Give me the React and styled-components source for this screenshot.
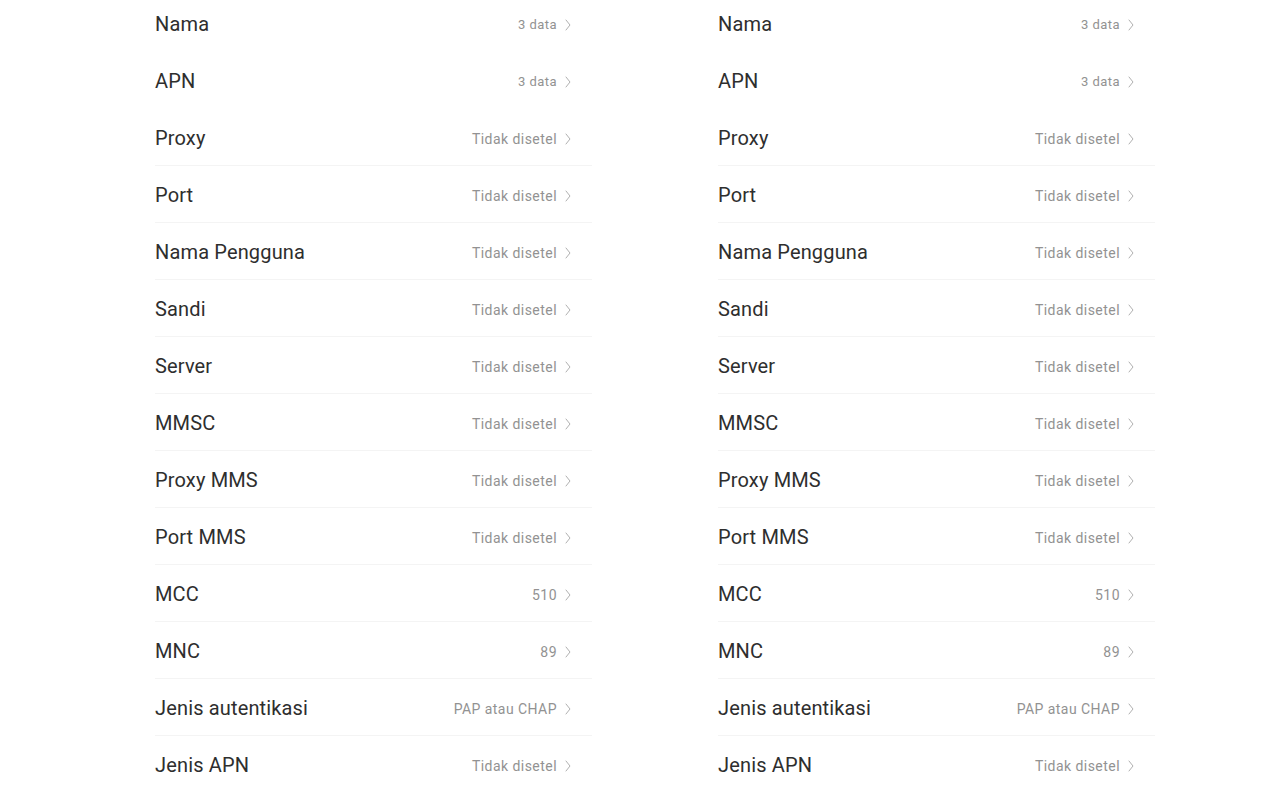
import React from 'react';
import styled, { createGlobalStyle } from 'styled-components';

const GlobalStyle = createGlobalStyle`
    html, body {
        margin: 0;
        padding: 0;
        background: #ffffff;
        overflow: hidden;
    }
    body {
        font-family: Roboto, "Noto Sans", Arial, sans-serif;
    }
`;

const Page = styled.main`
    width: 1283px;
    height: 785px;
    overflow: hidden;
    box-sizing: border-box;
    padding-left: 155px;
    display: grid;
    grid-template-columns: 437px 437px;
    column-gap: 126px;
    align-items: start;
`;

const List = styled.section`
    margin-top: -5px;
    display: flex;
    flex-direction: column;
`;

const Row = styled.div`
    height: 57px;
    box-sizing: border-box;
    display: flex;
    align-items: center;
    justify-content: space-between;
    padding-right: 21px;
    border-bottom: 1px solid ${(p) => (p.$divider ? '#f4f4f4' : 'transparent')};
`;

const Label = styled.span`
    font-size: 20px;
    color: #2e2e2e;
    letter-spacing: 0.15px;
    padding-top: 1px;
`;

const Value = styled.span`
    display: flex;
    align-items: center;
    gap: 8px;
    font-size: ${(p) => (p.$small ? '13px' : '14px')};
    color: #929292;
    letter-spacing: 0.45px;
    padding-top: 3px;
`;

const Chevron = () => (
    <svg width="6" height="12" viewBox="0 0 6 12" fill="none">
        <polyline points="1,1 5,6 1,11" stroke="#b0b0b0" strokeWidth="1" strokeLinejoin="round" strokeLinecap="round" />
    </svg>
);

const rows = [
    ['Nama', '3 data', true],
    ['APN', '3 data', true],
    ['Proxy', 'Tidak disetel'],
    ['Port', 'Tidak disetel'],
    ['Nama Pengguna', 'Tidak disetel'],
    ['Sandi', 'Tidak disetel'],
    ['Server', 'Tidak disetel'],
    ['MMSC', 'Tidak disetel'],
    ['Proxy MMS', 'Tidak disetel'],
    ['Port MMS', 'Tidak disetel'],
    ['MCC', '510'],
    ['MNC', '89'],
    ['Jenis autentikasi', 'PAP atau CHAP'],
    ['Jenis APN', 'Tidak disetel'],
];

function ApnList() {
    return (
        <List>
            {rows.map(([label, value, small], i) => (
                <Row key={label} $divider={i >= 2 && i < rows.length - 1}>
                    <Label>{label}</Label>
                    <Value $small={small}>
                        {value}
                        <Chevron />
                    </Value>
                </Row>
            ))}
        </List>
    );
}

export default function App() {
    return (
        <>
            <GlobalStyle />
            <Page>
                <ApnList />
                <ApnList />
            </Page>
        </>
    );
}
